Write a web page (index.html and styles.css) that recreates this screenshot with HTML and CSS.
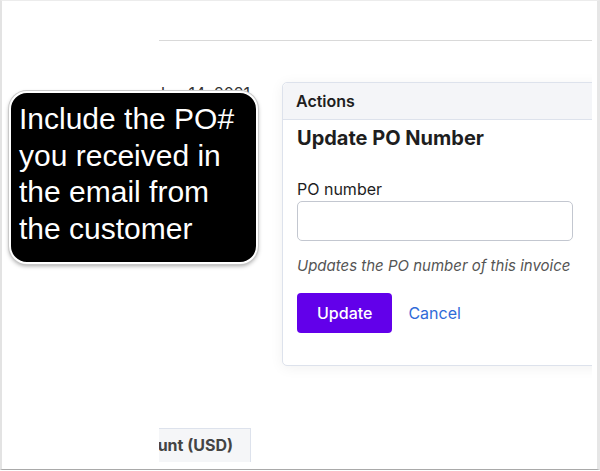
FILE: index.html
```html
<!DOCTYPE html>
<html lang="en">
<head>
    <meta charset="UTF-8">
    <title>Invoice - Update PO Number</title>
    <meta name="viewport" content="width=device-width, initial-scale=1">
    <link rel="stylesheet" href="styles.css">
</head>
<body>
<div class="screen">
    <div class="viewport">
        <main class="content">
            <div class="topbar"></div>
            <div class="row">
                <div class="side">
                    <div class="date">Jun 14, 2021</div>
                </div>
                <section class="card">
                    <div class="card-head">Actions</div>
                    <div class="card-body">
                        <h3>Update PO Number</h3>
                        <form id="poForm" autocomplete="off">
                            <label for="po">PO number</label>
                            <input type="text" id="po" name="po">
                            <p class="hint">Updates the PO number of this invoice</p>
                            <div class="buttons">
                                <button type="submit">Update</button>
                                <a href="#" class="cancel">Cancel</a>
                            </div>
                        </form>
                    </div>
                </section>
            </div>
            <div class="items">
                <div class="th">Amount (USD)</div>
            </div>
        </main>
    </div>
    <!-- tooltip from the walkthrough -->
    <div class="callout">Include the PO# you received in the email from the customer</div>
</div>
</body>
</html>
```

FILE: styles.css
```css
* { box-sizing: border-box; }
body { margin: 0; background: #fff; font-family: Inter, "Noto Sans", sans-serif; color: #222; }
.screen { position: relative; width: 600px; height: 470px; border-left: 2px solid #e3e3e3; border-top: 1px solid #ececec; border-right: 3px solid #e6e6e6; border-bottom: 1px solid #a9a9a9; overflow: hidden; }
.viewport { width: 590px; height: 100%; overflow: hidden; }
.content { padding-left: 157px; }
.topbar { height: 40px; border-bottom: 1px solid #d9d9d9; }
.row { display: flex; gap: 32px; margin-top: 41px; align-items: flex-start; }
.side { width: 91px; flex: none; display: flex; justify-content: flex-end; }
.date { white-space: nowrap; font-size: 16px; line-height: 20px; margin-top: 1px; color: #333; }
.card { flex: none; width: 330px; border: 1px solid #dde2ec; border-radius: 5px; background: #fff; box-shadow: 0 2px 14px rgba(0,0,0,0.06); }
.card-head { height: 37px; background: #f4f5f8; border-bottom: 1px solid #dde2ec; padding: 0 13px; font-size: 16px; font-weight: 600; line-height: 37px; color: #1e1e1e; border-radius: 5px 5px 0 0; }
.card-body { padding: 6px 14px 32px; }
h3 { margin: 0; font-size: 20px; line-height: 24px; font-weight: 700; color: #1e1e1e; }
label { display: block; margin-top: 29px; font-size: 16px; line-height: 20px; color: #1e1e1e; }
input { display: block; width: 276px; height: 40px; margin-top: 2px; border: 1px solid #c3c7d0; border-radius: 5px; font-size: 16px; padding: 0 10px; }
.hint { margin: 15px 0 0; font-size: 15px; line-height: 20px; font-style: italic; color: #555; }
.buttons { display: flex; align-items: center; gap: 16px; margin-top: 17px; }
button { height: 40px; padding: 0 20px; background: #6200ea; color: #fff; border: none; border-radius: 4px; font-family: inherit; font-size: 16px; font-weight: 500; cursor: pointer; }
.cancel { color: #2f6bd8; text-decoration: none; font-size: 16px; }
.items { width: 92px; margin-top: 62px; }
.th { display: flex; justify-content: flex-end; overflow: hidden; white-space: nowrap; height: 34px; padding-right: 17px; background: #f5f6f8; border-top: 1px solid #dde2ec; border-right: 1px solid #dde2ec; font-size: 16px; font-weight: 700; line-height: 33px; color: #444; }
.callout { position: absolute; left: 7px; top: 90px; width: 249px; height: 173px; padding: 8px 6px 0 8px; background: #000; color: #fff; border: 2px solid #fff; border-radius: 18px; box-shadow: 0 0 0 1px #c9c9c9, 0 2px 4px rgba(0,0,0,0.35); font-family: "Liberation Sans", Arial, sans-serif; font-size: 30px; line-height: 36.5px; }
```
